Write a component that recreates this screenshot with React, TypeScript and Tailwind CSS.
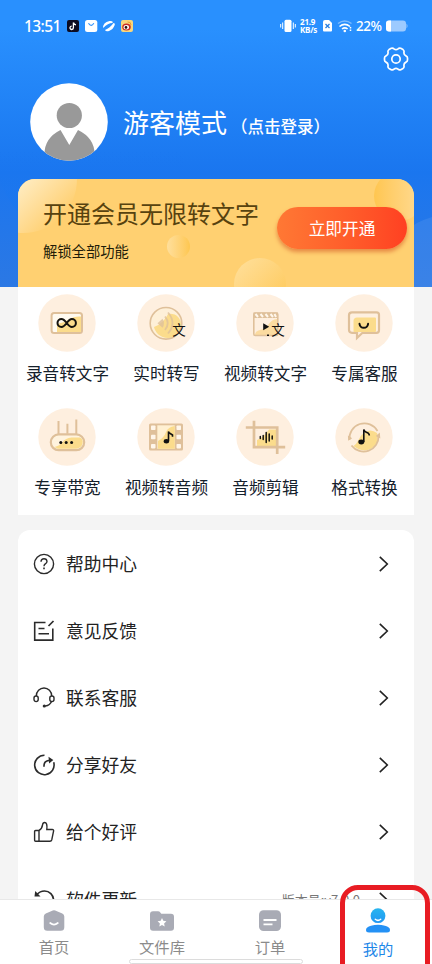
import React from 'react';

const TAN = '#dfc09a';
const SAND = '#fbdc8c';

const tools = [
  { label: '录音转文字', icon: <RecordIcon /> },
  { label: '实时转写', icon: <LiveIcon /> },
  { label: '视频转文字', icon: <VideoTextIcon /> },
  { label: '专属客服', icon: <ServiceIcon /> },
  { label: '专享带宽', icon: <RouterIcon /> },
  { label: '视频转音频', icon: <FilmIcon /> },
  { label: '音频剪辑', icon: <CropIcon /> },
  { label: '格式转换', icon: <ConvertIcon /> },
];

const menu = [
  { label: '帮助中心', icon: <HelpIcon /> },
  { label: '意见反馈', icon: <FeedbackIcon /> },
  { label: '联系客服', icon: <HeadsetIcon /> },
  { label: '分享好友', icon: <ShareIcon /> },
  { label: '给个好评', icon: <ThumbIcon /> },
  { label: '软件更新', icon: <UpdateIcon />, note: '版本号:v7.0.0' },
];

const tabs = [
  { label: '首页', icon: <HomeTab /> },
  { label: '文件库', icon: <FilesTab /> },
  { label: '订单', icon: <OrdersTab /> },
  { label: '我的', icon: <MineTab />, active: true },
];

function ToolCircle({ children }: { children: React.ReactNode }) {
  return (
    <svg className="mr-px" width="58" height="58" viewBox="0 0 58 58" fill="none">
      <circle cx="29" cy="29" r="28.7" fill="#feefdf" />
      {children}
    </svg>
  );
}

function WenGlyph() {
  return (
    <text x="35.3" y="41.2" fontSize="13.5" fill="#111">
      文
    </text>
  );
}

function RecordIcon() {
  return (
    <ToolCircle>
      <rect x="13.6" y="19" width="30.4" height="20" rx="2.5" fill="#fffaf0" stroke={TAN} strokeWidth="2" />
      <path d="M19 38V30q7-1 12-4.5T43 22.500V38Z" fill={SAND} />
      <path
        d="M28.700 29c-2-2.700-3.400-4-5.200-4a4 4 0 0 0 0 8c1.800 0 3.200-1.300 5.200-4s3.400-4 5.200-4a4 4 0 0 1 0 8c-1.800 0-3.200-1.300-5.200-4Z"
        stroke="#15130e"
        strokeWidth="2"
      />
    </ToolCircle>
  );
}

function LiveIcon() {
  return (
    <ToolCircle>
      <circle cx="29" cy="29.300" r="16" fill="#fef0d8" />
      <path d="M17 33c6-2 11-7 14-13 8-1 13 4 13 11s-5 13-13 13-13-6-14-11Z" fill={SAND} />
      <circle cx="29" cy="29.300" r="15.800" stroke={TAN} strokeWidth="1.600" />
      <path d="m20.500 29.200 5-4.500q3 4.500 0 9Z" fill={TAN} opacity=".8" />
      <path d="M28 22.500q5.500 6.700 0 13.500M31 18.500q9 10.700 0 21" stroke={TAN} strokeWidth="1.800" opacity=".8" />
      <WenGlyph />
    </ToolCircle>
  );
}

function VideoTextIcon() {
  return (
    <ToolCircle>
      <path d="M19 41q0-4 5-5 5-1 8-5 4-6 9-6v16Z" fill="#fbdba0" />
      <rect x="17.800" y="19" width="24" height="22.500" rx="1.500" stroke={TAN} strokeWidth="1.600" />
      <path d="M17.500 18.500h24.500v5.500h-24.500Z" fill={TAN} />
      <path d="m19.500 20 2.500 3m2.500-3 2.500 3m2.500-3 2.500 3m2.500-3 2.500 3m1.500-3 1.500 3" stroke="#fff7ec" strokeWidth="2" />
      <path d="M27.200 29.200v7l6-3.500Z" fill="#111" />
      <path d="M31 40.500h2V42h-2Z" fill="#111" />
      <WenGlyph />
    </ToolCircle>
  );
}

function ServiceIcon() {
  return (
    <ToolCircle>
      <path
        d="M17 18.300h24.500a2.500 2.500 0 0 1 2.500 2.500v15.500a2.500 2.500 0 0 1-2.500 2.500h-14l-5.500 5.200v-5.200h-5a3 3 0 0 1-3-3V21.300a3 3 0 0 1 3-3Z"
        fill="#fef0e0"
        stroke={TAN}
        strokeWidth="2.200"
      />
      <path d="M22 23.500h18q1 0 1 1v12.500q0 1-1 1H19.500q-1 0-1-1V27q0-3.500 3.500-3.500Z" fill={SAND} />
      <path d="M24.500 29.800q.7 4 4.300 4t4.300-4" stroke="#111" strokeWidth="2" strokeLinecap="round" />
    </ToolCircle>
  );
}

function RouterIcon() {
  return (
    <ToolCircle>
      <path d="M20.500 13v13M29.400 15.800v10M38.300 11.500v14.500" stroke={TAN} strokeWidth="2" />
      <rect x="12.800" y="26.400" width="33.400" height="15.800" rx="7.900" fill="#fff3de" stroke={TAN} strokeWidth="2.200" />
      <path d="M16.500 39q5-1 8-5t9-4.500h8.500q3.500 1.500 2.500 6t-6 5.200H20Z" fill={SAND} />
      <circle cx="22.800" cy="34.400" r="1.500" fill="#111" />
      <circle cx="28.200" cy="34.400" r="1.500" fill="#111" />
      <circle cx="33.600" cy="34.400" r="1.500" fill="#111" />
    </ToolCircle>
  );
}

function FilmIcon() {
  return (
    <ToolCircle>
      <rect x="12" y="15.500" width="34" height="27" rx="1.500" fill={TAN} />
      <path d="M20.300 17.300h17.400v23.500H20.300Z" fill="#fff0d2" />
      <path d="M21 40.800V33q6-3 8-9 2-5 8.700-6v22.800Z" fill={SAND} />
      {[17.5, 26.700, 35.900].map((y) => (
        <g key={y} fill="#fff6ea">
          <rect x="14" y={y} width="4.500" height="4.500" rx=".8" />
          <rect x="39.500" y={y} width="4.500" height="4.500" rx=".8" />
        </g>
      ))}
      <ellipse cx="29.400" cy="33.200" rx="2.700" ry="2.200" fill="#111" />
      <path d="M31.500 33V23.500l.5 1.200 3.500 2.300v1.800" stroke="#111" strokeWidth="1.600" />
    </ToolCircle>
  );
}

function CropIcon() {
  return (
    <ToolCircle>
      <path d="M21 38V32q7-3 10-8l2-2.500h7V38Z" fill={SAND} />
      <path d="M18 12.800v26.400h31.200M9.800 19.500h31.400V46" stroke={TAN} strokeWidth="2.700" />
      <path
        d="M24.300 28.600v1.800M27.200 27.500v4M30.200 24.500v10M33.200 26v7M36.200 28v3"
        stroke="#15130e"
        strokeWidth="1.500"
        strokeLinecap="round"
      />
    </ToolCircle>
  );
}

function ConvertIcon() {
  return (
    <ToolCircle>
      <path d="M18.500 38q3-2 5-6 4-9 12-9.500 3 0 6.500 2.500 2.500 7-2 12.500-4 4.500-10.500 5-6-.5-11-4.500Z" fill={SAND} />
      <path d="M14.500 32A15 15 0 0 1 42.500 23M43.500 27.500A15 15 0 0 1 16.500 37.500" stroke={TAN} strokeWidth="1.700" />
      <path d="m12.900 27.500.3 5.300 4-2.500ZM45.300 30.500l-.5-6-4 3.500Z" fill={TAN} />
      <ellipse cx="26.300" cy="34" rx="3" ry="2.400" fill="#111" />
      <path d="M28.800 34V21.500q.5 2.300 3 3 2.500.800 2.500 3" stroke="#111" strokeWidth="1.600" />
    </ToolCircle>
  );
}

function LineIcon({ children }: { children: React.ReactNode }) {
  return (
    <svg width="22" height="22" viewBox="0 0 22 22" fill="none" stroke="#2b2b2b" strokeWidth="1.4">
      {children}
    </svg>
  );
}

function HelpIcon() {
  return (
    <LineIcon>
      <circle cx="11" cy="11" r="9.600" />
      <path d="M8 8.700q.2-2.900 3-2.900t3 2.700q0 1.300-1.700 2.400-1.300.900-1.300 2.400" />
      <path d="M11 14.600v1.700" strokeWidth="1.600" />
    </LineIcon>
  );
}

function FeedbackIcon() {
  return (
    <LineIcon>
      <path d="M12.500 2.500H1.700v17.600h18.100V8.500" strokeWidth="1.600" />
      <path d="m15.500 6 5-5" strokeWidth="1.700" />
      <path d="M5.500 8.500h6M5.500 13.700h10.500" strokeWidth="1.600" />
    </LineIcon>
  );
}

function HeadsetIcon() {
  return (
    <LineIcon>
      <path d="M3.300 9a7.700 8 0 0 1 15.400 0M18.700 14q-1.500 4.500-6.500 5" />
      <rect x="1" y="9" width="4.200" height="5.600" rx="2.100" />
      <rect x="16.800" y="9" width="4.200" height="5.600" rx="2.100" />
      <circle cx="11.300" cy="19" r="1.600" fill="#2b2b2b" stroke="none" />
    </LineIcon>
  );
}

function ShareIcon() {
  return (
    <LineIcon>
      <path d="M11.500 1.300a9.700 9.700 0 1 0 9.200 7" strokeWidth="1.600" />
      <path d="M11 12.800q-.5-6.500 6.500-6.600" strokeWidth="1.600" />
      <path d="m15.500 2.800 4.800 3.300-4.200 3.500Z" fill="#2b2b2b" stroke="none" />
    </LineIcon>
  );
}

function ThumbIcon() {
  return (
    <LineIcon>
      <path d="M6 9.500H2.600q-1 0-1 1v8.700q0 1 1 1h14.300q1.500 0 1.900-1.500L20.600 10q.2-1.500-1.300-1.500h-5.500q.8-7-2.200-7-1.700 0-2 2.200Q9 8 6 9.500ZM6 9.500v10.700" />
    </LineIcon>
  );
}

function UpdateIcon() {
  return (
    <LineIcon>
      <path d="M4 5.500Q7 2 11.500 2a9 9 0 0 1 9 9q0 9-9.500 9-7 0-9-6" strokeWidth="1.700" />
      <path d="m2.200 2-.7 5.500h6Z" fill="#2b2b2b" stroke="none" />
    </LineIcon>
  );
}

function HomeTab() {
  return (
    <svg width="26" height="24" viewBox="0 0 26 24" fill="none">
      <path d="m11.800 1.400-7 3.200q-2 1-2 3v10.600q0 3.500 3.500 3.500h13.500q3.500 0 3.500-3.500V7.600q0-2-2-3l-7.100-3.200q-1.200-.5-2.400 0Z" fill="#a9abb5" />
      <path d="M9.200 14q3.800 3.200 7.600 0" stroke="#fff" strokeWidth="1.700" strokeLinecap="round" />
    </svg>
  );
}

function FilesTab() {
  return (
    <svg width="26" height="24" viewBox="0 0 26 24">
      <path d="M4 2.200h5q1.500 0 2.300 1.200l1 1.400H22q3 0 3 3v11q0 3-3 3H4q-3 0-3-3V5.200q0-3 3-3Z" fill="#a9abb5" />
      <path d="m13 9 1.300 2.800 3.100.4-2.300 2.200.6 3.100-2.700-1.500-2.700 1.500.6-3.100-2.300-2.200 3.100-.4Z" fill="#fff" />
    </svg>
  );
}

function OrdersTab() {
  return (
    <svg width="26" height="24" viewBox="0 0 26 24">
      <rect x="2" y="1.300" width="22" height="20.700" rx="4.500" fill="#a9abb5" />
      <path d="M6.500 11h13M6.500 15.300h9" stroke="#fff" strokeWidth="1.800" />
    </svg>
  );
}

function MineTab() {
  return (
    <svg width="26" height="26" viewBox="0 0 26 26" fill="none">
      <defs>
        <linearGradient id="mine" x1="0" y1="0" x2="0" y2="1">
          <stop offset="0" stopColor="#27b5ef" />
          <stop offset="1" stopColor="#2196f3" />
        </linearGradient>
      </defs>
      <circle cx="13" cy="7.700" r="7.400" fill="url(#mine)" />
      <path d="M1 22q0-3 5-4.200 7-1.900 14 0 5 1.200 5 4.200 0 2.500-3 2.500H4q-3 0-3-2.500Z" fill="#2491f5" />
      <path d="M10.300 11.200q2.700 2.400 5.400 0" stroke="#fff" strokeWidth="1.500" strokeLinecap="round" />
    </svg>
  );
}

function StatusBar() {
  return (
    <div className="relative flex h-[34px] items-center pt-[18px] pl-6 text-white">
      <span className="w-[43px] font-['Noto_Sans'] text-[15.5px] leading-4 font-medium tracking-[-0.6px]">13:51</span>
      <svg width="66" height="12" viewBox="0 0 66 12" fill="none">
        <rect width="12" height="12" rx="2" fill="#0c0b20" />
        <path d="M6.400 2.500v5.300a1.700 1.700 0 1 1-1.700-1.700M6.400 2.500q.4 2 2.600 2.300" stroke="#fff" strokeWidth="1.300" />
        <rect x="18" width="12.300" height="12" rx="2.500" fill="#fff" />
        <path d="M21.500 3.200q2.700 4.400 5.300 0" stroke="#2a8ffb" strokeWidth="1.200" />
        <path d="M36.200 8q-.5-5.500 6.300-7Q46.500.5 45.500 3q-4.500 0-9.300 5ZM38 10q5-2 8.500-7 2 0 1 2.500-1.500 4-5.500 5.500-3 1-4-1Z" fill="#fff" />
        <rect x="54" width="12" height="12" rx="2" fill="#f8d77d" />
        <ellipse cx="59.500" cy="7" rx="4.300" ry="3.500" fill="#c92f26" />
        <ellipse cx="59.300" cy="7.300" rx="2.700" ry="2.200" fill="#fff" />
        <circle cx="59" cy="7.400" r="1.300" fill="#25100c" />
        <path d="M60.500 2q3.500-.5 3.500 3" stroke="#ed9b2d" />
      </svg>
      <svg className="ml-[147px]" width="16" height="14" viewBox="0 0 16 14" fill="none" stroke="#fff">
        <rect x="4.500" y=".800" width="7" height="12.200" rx="1.500" fill="#fff" stroke="none" />
        <path d="M2.700 3.500v6.500M.700 5v3.500M13.300 3.500v6.500M15.300 5v3.500" />
      </svg>
      <div className="ml-[4px] flex w-[20px] flex-col font-['Noto_Sans'] text-[8px] font-bold tracking-[-0.2px] whitespace-nowrap">
        <span className="h-2 leading-2">21.9</span>
        <span className="h-2 leading-2">KB/s</span>
      </div>
      <svg className="ml-[2px]" width="32" height="14" viewBox="0 0 32 14" fill="none" stroke="#fff">
        <path d="M3 1h4l3 3v7.500q0 1-1 1H2q-1 0-1-1V3q0-2 2-2Z" fill="#fff" stroke="none" />
        <path d="m3.500 5 4 4m0-4-4 4" stroke="#287fe0" strokeWidth="1.300" />
        <path d="M16 4.500q6.700-5 13.500 0" opacity=".4" strokeWidth="1.500" />
        <path d="M17.500 7.500q5.200-4.400 10.500 0M20 10q2.800-2.400 5.600 0" strokeWidth="1.600" />
        <circle cx="22.800" cy="12" r="1.300" fill="#fff" stroke="none" />
        <path d="M28.500 8v4" strokeDasharray="1.500 1" strokeWidth="1.500" />
      </svg>
      <span className="ml-[2px] w-[29px] font-['Noto_Sans'] text-[13.5px] leading-4 font-medium tracking-[-0.5px]">22%</span>
      <svg className="ml-[1px]" width="22" height="12" viewBox="0 0 22 12">
        <rect width="20" height="11" y=".5" rx="3" fill="#9ccaff" />
        <path d="M3 .5h2v11H3q-3 0-3-3v-5Q0 .5 3 .5Z" fill="#fff" />
        <path d="M20.500 3.500q2 2.500 0 5Z" fill="#9ccaff" />
      </svg>
    </div>
  );
}

function Header() {
  return (
    <header className="relative h-[287px] shrink-0 overflow-hidden bg-linear-to-b from-[#2990fe] from-10% via-[#1a76ef] via-60% to-[#2b78e4]">
      {/* faint background bubbles */}
      <div className="absolute top-[55px] left-[-5px] h-[190px] w-[190px] rounded-full bg-linear-to-b from-transparent from-50% to-[#1a76ef]" />
      <div className="absolute top-[214px] left-[374px] h-[160px] w-[160px] rounded-full bg-white/8" />
      <StatusBar />
      <div className="relative flex h-[49px] justify-end pt-[13px] pr-[23px]">
        <svg width="26" height="24" viewBox="0 0 26 24" fill="none" stroke="#fff" strokeWidth="1.700" strokeLinejoin="round">
          <path d="M8.300 1.300q1.500-.7 2.700.5 2 1.600 4 0 1.200-1.200 2.700-.5l2.300 1.300q1.300.900 1 2.500-.5 2.700 2 3.800 1.500.600 1.500 2.100v2q0 1.500-1.500 2.100-2.500 1.100-2 3.800.3 1.600-1 2.500l-2.300 1.300q-1.500.7-2.700-.5-2-1.600-4 0-1.200 1.200-2.700.5L6 21.400q-1.300-.9-1-2.500.5-2.700-2-3.800Q1.500 14.500 1.500 13v-2q0-1.500 1.500-2.100Q5.500 7.800 5 5.100q-.3-1.600 1-2.500Z" />
          <circle cx="13" cy="12" r="4.200" />
        </svg>
      </div>
      <div className="relative flex h-[78px] items-center pl-[30px] text-white">
        <svg width="78" height="78" viewBox="0 0 78 78">
          <clipPath id="avatar">
            <circle cx="39" cy="39" r="38.800" />
          </clipPath>
          <circle cx="39" cy="39" r="38.800" fill="#fff" />
          <g clipPath="url(#avatar)" fill="#999">
            <circle cx="39.300" cy="32.500" r="12.600" />
            <path d="m30.500 47 8.800 15L48 47q16.500 8 16.500 24v8H14.500v-8q0-16 16-24Z" />
          </g>
        </svg>
        <span className="ml-[15px] text-[26px] leading-none">游客模式</span>
        <span className="mt-[8px] ml-[4px] text-[16.5px] leading-none font-medium">（点击登录）</span>
      </div>
      <div className="relative mx-[18px] mt-[18px] flex h-[108px] justify-between overflow-hidden rounded-t-[17px] bg-[#ffd071] pr-[7px] pl-[25px]">
        <div className="absolute top-[-54px] left-[-49px] h-[108px] w-[108px] rounded-full bg-linear-to-br from-[#fff0cc] from-45% to-[#ffd071] to-85%" />
        <div className="absolute top-[56px] left-[149px] h-[23px] w-[23px] rounded-full bg-linear-to-r from-[#ffdf9b] to-[#fec750]" />
        <div className="absolute top-[79px] left-[216px] h-[52px] w-[52px] rounded-full bg-linear-to-br from-[#ffe09c] to-[#fec751]" />
        <div className="absolute top-[-8px] left-[356px] h-[50px] w-[50px] rounded-full bg-linear-to-r from-[#ffc650] to-[#ffdc95]" />
        <div className="relative pt-[22px]">
          <h2 className="text-[24px] leading-6 text-[#57420f]">开通会员无限转文字</h2>
          <p className="mt-[19px] text-[14.3px] leading-[14px] text-[#211b08]">解锁全部功能</p>
        </div>
        <button className="relative mt-7 h-[42px] w-[130px] rounded-full bg-linear-to-r from-[#ff7834] to-[#ff4022] pt-[2px] text-[16.7px] text-white shadow-[0_3px_4px_#e68a45]">
          立即开通
        </button>
      </div>
    </header>
  );
}

export default function App() {
  return (
    <div className="relative flex h-[964px] w-[432px] flex-col overflow-hidden bg-[#f4f4f4] font-['Noto_Sans_CJK_SC',sans-serif]">
      <Header />

      <main className="min-h-0 flex-1 overflow-hidden">
        <section className="mx-[18px] grid h-[228px] grid-cols-4 content-start gap-y-[14px] bg-white pt-[7px]">
          {tools.map((tool) => (
            <div key={tool.label} className="flex h-[100px] flex-col items-center">
              {tool.icon}
              <span className="mt-[12px] text-[16.6px] leading-[18px] whitespace-nowrap text-[#14202b]">{tool.label}</span>
            </div>
          ))}
        </section>

        <section className="mx-[18px] mt-[15px] rounded-t-[12px] bg-white">
          {menu.map((item) => (
            <div key={item.label} className="flex h-[67.2px] items-center pr-[24px] pl-[15px]">
              {item.icon}
              <span className="ml-[11px] pb-[2px] text-[17.8px] leading-5 text-[#222]">{item.label}</span>
              <span className="mr-[18px] ml-auto text-[13px] leading-4 text-[#777]">{item.note}</span>
              <svg width="12" height="18" viewBox="0 0 12 18" fill="none" stroke="#222" strokeWidth="1.600">
                <path d="m1.800 1.800 7.500 7.200-7.500 7.200" />
              </svg>
            </div>
          ))}
        </section>
      </main>

      <nav className="relative grid h-[65px] shrink-0 grid-cols-4 border-t border-[#e8e8e8] bg-white">
        {tabs.map((tab) => (
          <div
            key={tab.label}
            className={`flex flex-col items-center text-[15.3px] leading-4 ${tab.active ? 'pt-2 text-[#1e87e8]' : 'pt-[9px] text-[#8b8b8b]'}`}
          >
            <div className={tab.active ? 'h-8' : 'h-[29px]'}>{tab.icon}</div>
            {tab.label}
          </div>
        ))}
        <div className="absolute bottom-0 left-[129px] h-[5px] w-[174px] rounded-full border border-[#dcdcdc] bg-white" />
      </nav>

      {/* highlight around the active tab */}
      <div className="absolute top-[885px] left-[340px] h-[110px] w-[90px] rounded-[18px] border-[5px] border-[#e81c23]" />
    </div>
  );
}
